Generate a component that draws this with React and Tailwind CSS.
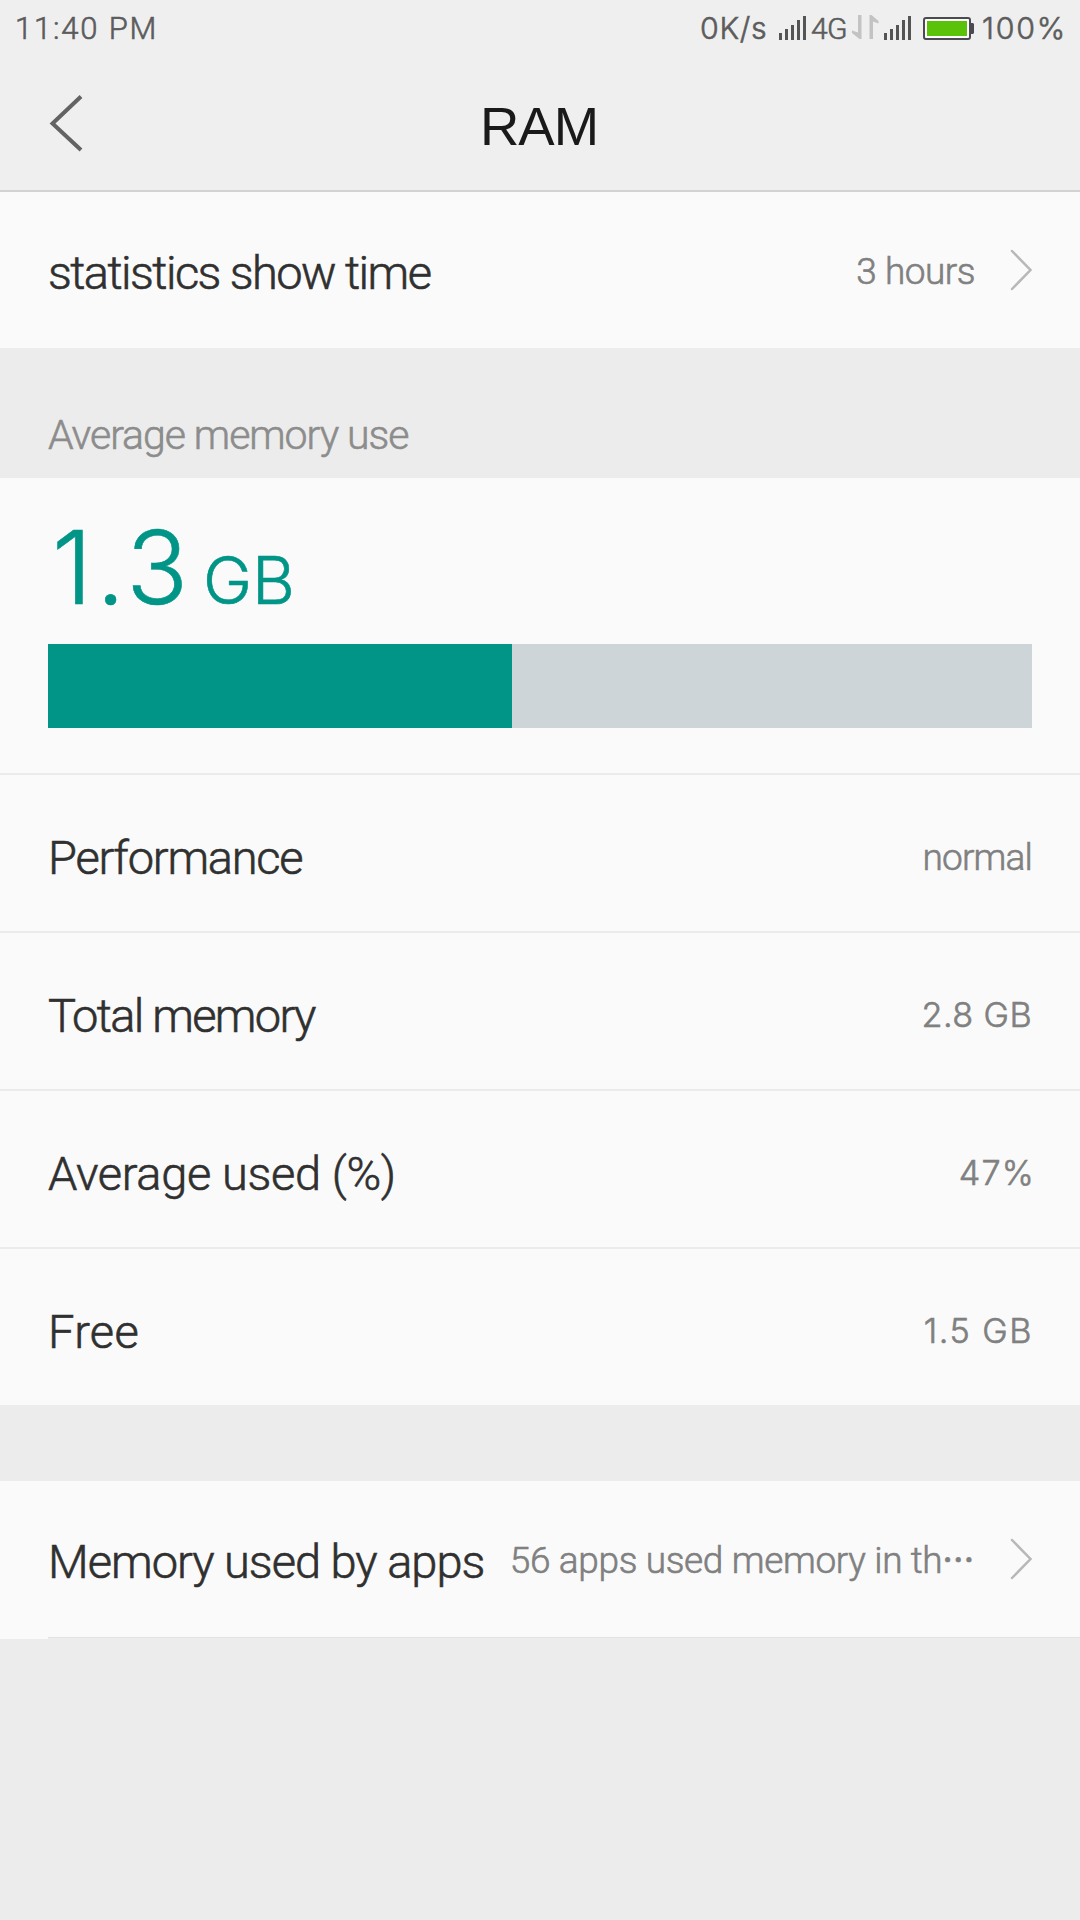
import React from "react";

const stats = [
  { label: "Performance", value: "normal", labelClass: "tracking-[-1.25px]", valueClass: "pt-[9px] text-[37px] tracking-[-0.85px]" },
  { label: "Total memory", value: "2.8 GB", labelClass: "tracking-[-1.7px]", valueClass: "pt-[7px] font-['Inter',sans-serif] text-[34.2px] tracking-[0.4px]" },
  { label: "Average used (%)", value: "47%", labelClass: "tracking-[-0.35px]", valueClass: "pt-[7px] font-['Inter',sans-serif] text-[34.2px] tracking-[1.2px] -mr-[3px]" },
  { label: "Free", value: "1.5 GB", labelClass: "tracking-[0.3px]", valueClass: "pt-[7px] font-['Inter',sans-serif] text-[34.2px] tracking-[1.5px] -mr-px" },
];

function Signal({ className }) {
  return (
    <svg width="27" height="24" viewBox="0 0 27 24" fill="#555" className={className}>
      <rect x="0" y="17" width="3" height="7" />
      <rect x="6" y="13" width="3" height="11" />
      <rect x="12" y="9" width="3" height="15" />
      <rect x="18" y="4" width="3" height="20" />
      <rect x="24" y="0" width="3" height="24" />
    </svg>
  );
}

function DataArrows() {
  return (
    <svg width="27" height="24" viewBox="0 0 27 24" fill="#c3c3c3" className="mb-0.5 ml-[5px]">
      <path d="M6 0h3.500v24H7.500L0 18V15.500l6 2z" />
      <path d="M17.500 24V0H19.500l7 6v2.500l-5.500-2v17.500z" />
    </svg>
  );
}

function Battery() {
  return (
    <svg width="51" height="23" viewBox="0 0 51 23" className="ml-3">
      <rect x="1" y="1" width="46" height="21" rx="2" fill="#fff" stroke="#4a4a50" strokeWidth="2" />
      <rect x="4" y="4" width="40" height="15" fill="#5bc20a" />
      <path d="M48 6h2l1 1v9l-1 1h-2z" fill="#4a4a50" />
    </svg>
  );
}

function StatusBar() {
  return (
    <div className="flex h-14 items-center justify-between pl-[15px] font-['Inter',sans-serif] text-[30.3px] text-[#5c5c5c]">
      <span className="pt-0.5 font-['Roboto',sans-serif] text-[31px] tracking-[1.8px]">11:40 PM</span>
      <div className="flex items-center">
        <span className="w-[79px] pt-0.5 tracking-[0.7px]">0K/s</span>
        <Signal />
        <span className="ml-[5px] w-[36px] font-['Roboto',sans-serif] text-[30px] tracking-[-0.6px]">4G</span>
        <DataArrows />
        <Signal className="ml-[5px]" />
        <Battery />
        <span className="ml-2 w-[98px] pt-0.5 tracking-[1.8px]">100%</span>
      </div>
    </div>
  );
}

function Header() {
  return (
    <div className="flex h-[136px] items-center border-b-2 border-[#d2d2d2] px-12">
      <svg width="36" height="58" viewBox="0 0 36 58" fill="none" stroke="#636363" strokeWidth="4" className="w-9">
        <path d="M33 2.500L4.500 29.500L33 56" />
      </svg>
      <h1 className="flex-1 pt-2 pr-[38px] text-center font-['Liberation_Sans',sans-serif] text-[54.5px] tracking-[-1px] text-[#1a1a1a] [-webkit-text-stroke:0px]">RAM</h1>
    </div>
  );
}

function Chevron() {
  return (
    <svg width="22" height="42" viewBox="0 0 22 42" fill="none" stroke="#b8b8b8" strokeWidth="2.500" strokeLinecap="round" className="shrink-0">
      <path d="M2 2L20.500 21L2 40" />
    </svg>
  );
}

export default function App() {
  return (
    <div className="flex min-h-[1920px] w-[1080px] flex-col overflow-hidden bg-[#ececec] font-['Roboto',sans-serif] font-light whitespace-nowrap [-webkit-text-stroke:0.6px]">
      <div className="bg-[#efefef]">
        <StatusBar />
        <Header />
      </div>

      <div className="flex h-[156px] items-center bg-[#fafafa] px-12">
        <span className="pt-1.5 text-[47px] tracking-[-1.55px] text-[#303030]">statistics show time</span>
        <span className="mr-[35px] ml-auto pt-1 text-[37px] tracking-[-0.5px] text-[#808080]">3 hours</span>
        <Chevron />
      </div>

      <div className="flex h-[130px] items-center px-12 pt-[45px] text-[41px] tracking-[-1.05px] text-[#8c8c8c]">
        Average memory use
      </div>

      <div className="h-[297px] border-b-2 border-[#ebebeb] bg-[#fafafa] px-12 pt-[38px]">
        <div className="flex h-[104px] items-baseline pl-1 font-['Inter',sans-serif] leading-none text-[#009587]">
          <span className="text-[102px] tracking-[4px]">1.3</span>
          <span className="ml-[11px] text-[66px]">GB</span>
        </div>
        <div className="mt-6 h-[84px] bg-[#cdd5d8]">
          <div className="h-full w-[464px] bg-[#009587]"></div>
        </div>
      </div>

      <div className="divide-y-2 divide-[#ebebeb] bg-[#fafafa]">
        {stats.map((s) => (
          <div key={s.label} className="flex h-[158px] items-center justify-between px-12 last:h-[156px]">
            <span className={"pt-[11px] text-[47px] text-[#303030] " + s.labelClass}>{s.label}</span>
            <span className={"text-[#808080] " + s.valueClass}>{s.value}</span>
          </div>
        ))}
      </div>

      <div className="mt-[76px] flex h-[156px] items-center bg-[#fafafa] px-12">
        <span className="pt-1.5 text-[47px] tracking-[-1px] text-[#303030]">Memory used by apps</span>
        <span className="ml-auto flex pt-1 text-[37px] tracking-[-0.35px] text-[#808080]">
          56 apps used memory in th
          <span className="-my-[6px] font-['Noto_Sans_CJK_SC',sans-serif] text-[32px] leading-[62px] font-medium">…</span>
        </span>
        <span className="ml-9">
          <Chevron />
        </span>
      </div>
      <div className="flex h-0.5">
        <div className="w-12 bg-[#fafafa]"></div>
        <div className="flex-1 border-t border-[#e2e2e2]"></div>
      </div>
    </div>
  );
}
